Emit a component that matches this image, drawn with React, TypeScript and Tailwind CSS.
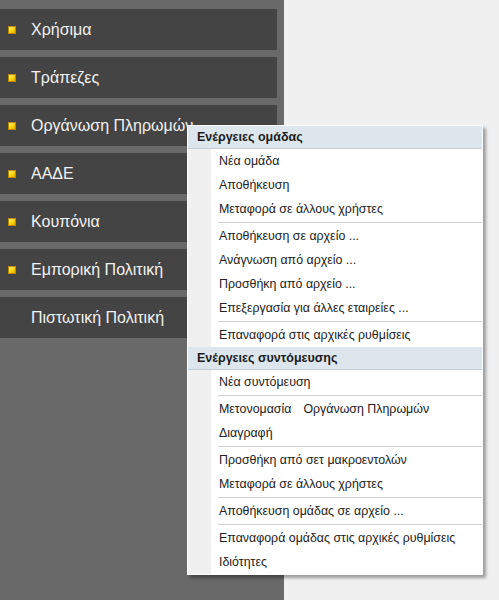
import React from 'react';

const NAV = [
  { label: 'Χρήσιμα', bullet: true },
  { label: 'Τράπεζες', bullet: true },
  { label: 'Οργάνωση Πληρωμών', bullet: true },
  { label: 'ΑΑΔΕ', bullet: true },
  { label: 'Κουπόνια', bullet: true },
  { label: 'Εμπορική Πολιτική', bullet: true },
  { label: 'Πιστωτική Πολιτική', bullet: false },
];

type Entry = { kind: 'item'; label: React.ReactNode } | { kind: 'sep' };

const GROUP: Entry[] = [
  { kind: 'item', label: 'Νέα ομάδα' },
  { kind: 'item', label: 'Αποθήκευση' },
  { kind: 'item', label: 'Μεταφορά σε άλλους χρήστες' },
  { kind: 'sep' },
  { kind: 'item', label: 'Αποθήκευση σε αρχείο ...' },
  { kind: 'item', label: 'Ανάγνωση από αρχείο ...' },
  { kind: 'item', label: 'Προσθήκη από αρχείο ...' },
  { kind: 'item', label: 'Επεξεργασία για άλλες εταιρείες ...' },
  { kind: 'sep' },
  { kind: 'item', label: 'Επαναφορά στις αρχικές ρυθμίσεις' },
];

const SHORTCUT: Entry[] = [
  { kind: 'item', label: 'Νέα συντόμευση' },
  { kind: 'sep' },
  {
    kind: 'item',
    label: (
      <>
        Μετονομασία<span className="ml-3">Οργάνωση Πληρωμών</span>
      </>
    ),
  },
  { kind: 'item', label: 'Διαγραφή' },
  { kind: 'sep' },
  { kind: 'item', label: 'Προσθήκη από σετ μακροεντολών' },
  { kind: 'item', label: 'Μεταφορά σε άλλους χρήστες' },
  { kind: 'sep' },
  { kind: 'item', label: 'Αποθήκευση ομάδας σε αρχείο ...' },
  { kind: 'sep' },
  { kind: 'item', label: 'Επαναφορά ομάδας στις αρχικές ρυθμίσεις' },
  { kind: 'item', label: 'Ιδιότητες' },
];

function Bullet() {
  return (
    <span className="absolute left-[8px] top-1/2 -translate-y-1/2 w-2 h-2 border border-[#c08a00] bg-[linear-gradient(135deg,#fff59a,#ffd200_55%,#e0a800)]" />
  );
}

function Section({ title, entries }: { title: string; entries: Entry[] }) {
  return (
    <>
      <div className="h-[23px] flex items-center pl-[9px] bg-[#dce6ec] border-b border-[#c4ccd2] font-bold text-[12.5px] text-[#1c1c1c]">
        {title}
      </div>
      <div className="flex">
        <div className="w-[23px] bg-[#f0f0f0]" />
        <div className="flex-1 flex flex-col">
          {entries.map((e, i) =>
            e.kind === 'sep' ? (
              <div key={i} className="h-[3px] flex items-center pl-[7px]">
                <div className="h-px w-full bg-[#d2d2d2]" />
              </div>
            ) : (
              <div key={i} className="h-6 flex items-center pl-[8px] pt-px text-[12.4px] text-[#222]">
                {e.label}
              </div>
            )
          )}
        </div>
      </div>
    </>
  );
}

export default function App() {
  return (
    <div className="relative w-[499px] h-[600px] bg-[#f0f0f0] flex overflow-hidden" style={{ fontFamily: '"Liberation Sans", Arial, sans-serif' }}>
      {/* side navigation */}
      <div className="w-[284px] h-full bg-[#696969] pt-[9px] flex flex-col gap-[7px]">
        {NAV.map(n => (
          <div key={n.label} className="relative w-[277px] h-[41px] bg-[#444444] flex items-center pl-[31px] pt-px text-[16px] text-[#f2f2f2] whitespace-nowrap">
            {n.bullet && <Bullet />}
            {n.label}
          </div>
        ))}
      </div>

      {/* context menu */}
      <div className="absolute left-[187px] top-[125px] w-[296px] bg-white p-px shadow-[3px_3px_3px_rgba(0,0,0,0.35)]">
        <Section title="Ενέργειες ομάδας" entries={GROUP} />
        <Section title="Ενέργειες συντόμευσης" entries={SHORTCUT} />
      </div>
    </div>
  );
}
